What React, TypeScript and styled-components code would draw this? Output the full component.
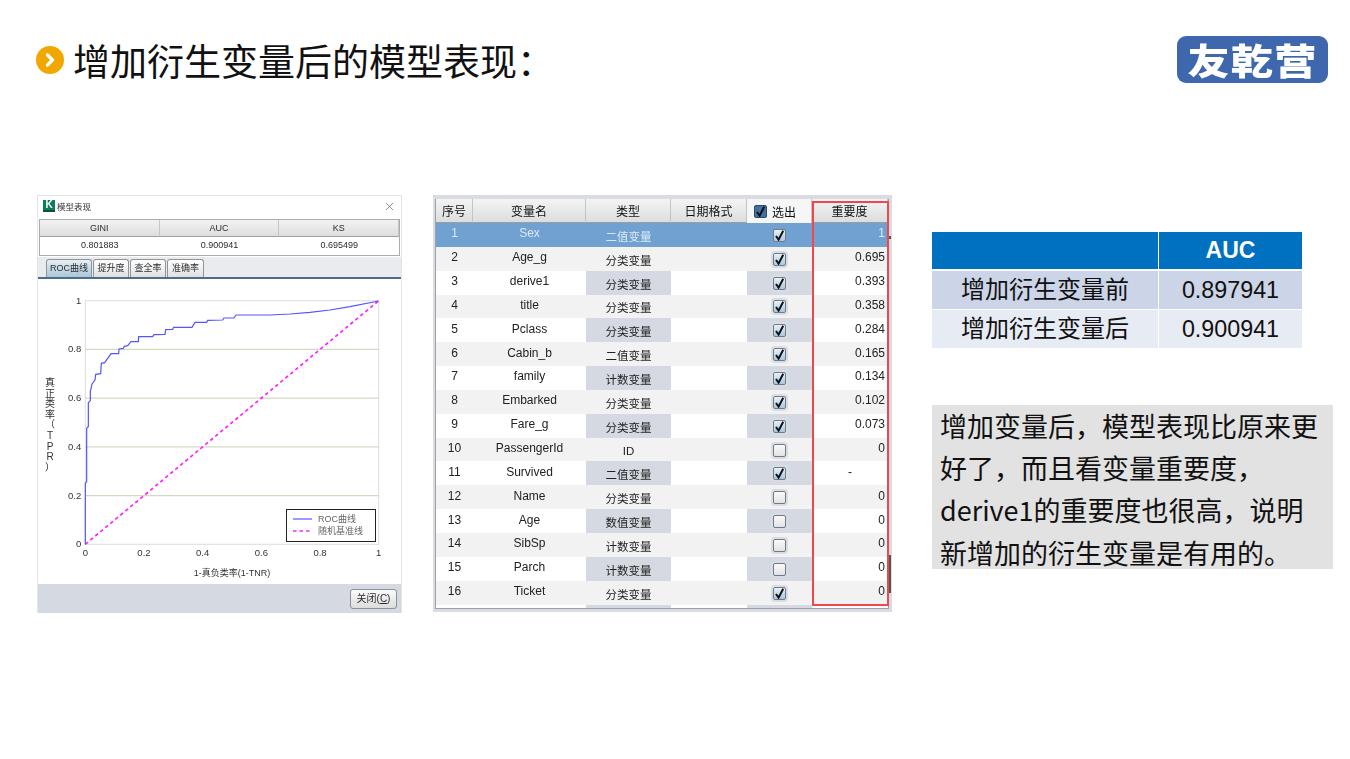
import styled, { createGlobalStyle } from "styled-components";
import { ChevronRight, X } from "lucide-react";

const CJK = `"Liberation Sans", "Noto Sans CJK SC", sans-serif`;
const SLIDE_FONT = `"Noto Sans CJK SC", sans-serif`;

const GlobalStyle = createGlobalStyle`
  html, body {
    margin: 0;
    padding: 0;
    background: #fff;
  }
  * {
    box-sizing: border-box;
  }
`;

const Page = styled.div`
  width: 1350px;
  height: 759px;
  overflow: hidden;
  padding: 36px 17px 0 36px;
  font-family: ${CJK};
  color: #111;
`;

const Header = styled.header`
  display: flex;
  align-items: center;
  justify-content: space-between;
  height: 47px;
  padding-right: 5px;
`;

const TitleWrap = styled.div`
  display: flex;
  align-items: center;
  gap: 9px;
`;

const Bullet = styled.span`
  width: 28px;
  height: 28px;
  border-radius: 50%;
  background: #f0a800;
  color: #fff;
  display: flex;
  align-items: center;
  justify-content: center;
`;

const Title = styled.h1`
  margin: 0;
  padding-top: 2px;
  font-size: 37px;
  font-weight: 400;
  line-height: 47px;
  font-family: ${SLIDE_FONT};
`;

const Logo = styled.div`
  width: 151px;
  height: 47px;
  border-radius: 9px;
  background: #3f67ae;
  color: #fff;
  display: flex;
  align-items: center;
  justify-content: center;
`;

const LogoText = styled.span`
  font-family: ${SLIDE_FONT};
  font-weight: 900;
  font-size: 36px;
  line-height: 47px;
  letter-spacing: 1px;
  white-space: nowrap;
  transform: scaleX(1.17);
`;

const Content = styled.main`
  display: flex;
  align-items: flex-start;
  margin-top: 112px;
  margin-left: 1px;
`;

// Pasted screenshots in the slide are slightly soft
const Shot = styled.section`
  filter: blur(0.45px);
  flex: none;
`;

const ModelWindow = styled(Shot)`
  width: 365px;
  height: 418px;
  display: flex;
  flex-direction: column;
  background: #fff;
  border: 1px solid #e4e4e4;
  border-bottom: none;
  font-size: 9px;
  color: #2c2c2c;
`;

const WindowBar = styled.div`
  height: 23px;
  display: flex;
  align-items: center;
  padding: 0 5px 3px 5px;
  gap: 2px;
  color: #333;
`;

const AppIcon = styled.span`
  width: 12px;
  height: 12px;
  background: #0b7d5e;
  border-bottom: 2px solid #0a4f3c;
  color: #fff;
  font-size: 10px;
  font-weight: 700;
  line-height: 10px;
  text-align: center;
`;

const WindowName = styled.span`
  flex: 1;
  font-size: 8.5px;
`;

const CloseGlyph = styled(X)`
  color: #555;
`;

const MetricGrid = styled.div`
  margin: 0 1px;
  display: grid;
  grid-template-columns: repeat(3, 1fr);
  border: 1px solid #a9acb0;
`;

const MetricHead = styled.div`
  height: 17px;
  line-height: 16px;
  text-align: center;
  background: linear-gradient(#f2f2f2, #dedede);
  border-bottom: 1px solid #9da0a4;
  border-right: 1px solid #c4c6c8;
`;

const MetricValue = styled.div`
  height: 18px;
  line-height: 17px;
  text-align: center;
  background: #fff;
`;

const Tabs = styled.div`
  height: 22px;
  margin-top: 1px;
  padding-left: 8px;
  display: flex;
  align-items: flex-end;
  gap: 1px;
  background: #e9ebee;
  border-bottom: 2px solid #4f6d86;
`;

const Tab = styled.div<{ $active?: boolean; $width: number }>`
  width: ${p => p.$width}px;
  height: 18px;
  line-height: 16px;
  text-align: center;
  border: 1px solid #8f9499;
  border-bottom: none;
  border-radius: 3px 3px 0 0;
  background: ${p => (p.$active ? "linear-gradient(#e6eff5, #a9c6da)" : "linear-gradient(#fff, #dfe0e2)")};
`;

const ChartArea = styled.div`
  flex: 1;
  min-height: 0;
`;

const ChartSvg = styled.svg`
  display: block;
`;

const Footer = styled.div`
  height: 29px;
  background: #d5d9e1;
  display: flex;
  align-items: center;
  justify-content: flex-end;
  padding-right: 4px;
`;

const CloseButton = styled.div`
  width: 47px;
  height: 20px;
  border: 1px solid #8e9195;
  border-radius: 3px;
  background: linear-gradient(#fbfbfb, #dcdcdc);
  font-size: 10px;
  line-height: 18px;
  text-align: center;

  u {
    text-decoration: underline;
  }
`;

const VariableFrame = styled(Shot)`
  position: relative;
  width: 459px;
  height: 417px;
  margin-left: 31px;
  background: #d9dce3;
  padding: 4px 3px 4px 2px;
  font-size: 12px;
  color: #222;
`;

const VariableTable = styled.div`
  height: 410px;
  overflow: hidden;
  background: #fff;
  border: 1px solid #9ea2a8;
  border-top: none;
`;

const COLUMNS = "37px 113px 85px 76px 65px 1fr";

const HeadRow = styled.div`
  display: grid;
  grid-template-columns: ${COLUMNS};
  height: 24px;
`;

const HeadCell = styled.div<{ $open?: boolean }>`
  display: flex;
  align-items: center;
  justify-content: ${p => (p.$open ? "flex-start" : "center")};
  gap: 5px;
  padding-left: ${p => (p.$open ? "7px" : "0")};
  font-size: 12px;
  color: #111;
  border-right: 1px solid #c2c4c8;
  border-bottom: ${p => (p.$open ? "none" : "1px solid #9a9ea4")};
  background: ${p => (p.$open ? "#f6f6f6" : "linear-gradient(#f4f4f4, #dddddd)")};
`;

const Row = styled.div<{ $tone: "selected" | "even" | "odd" }>`
  display: grid;
  grid-template-columns: ${COLUMNS};
  height: 23.85px;
  background: ${p => (p.$tone === "selected" ? "#70a1d0" : p.$tone === "even" ? "#f2f2f2" : "#fff")};
  color: ${p => (p.$tone === "selected" ? "#dce9f5" : "#222")};
`;

const Cell = styled.div`
  display: flex;
  align-items: center;
  justify-content: center;
  padding-bottom: 3px;
`;

const TypeCell = styled(Cell)<{ $shade: boolean }>`
  padding: 2px 0 0;
  font-size: 11.5px;
  background: ${p => (p.$shade ? "#d5d9e1" : "transparent")};
`;

const CheckCell = styled(Cell)<{ $shade: boolean }>`
  padding: 1px 0 0;
  background: ${p => (p.$shade ? "#d5d9e1" : "transparent")};
`;

const ScoreCell = styled(Cell)<{ $dash?: boolean }>`
  justify-content: ${p => (p.$dash ? "center" : "flex-end")};
  padding-right: ${p => (p.$dash ? "0" : "3px")};
`;

const Box = styled.span<{ $on: boolean; $halo: boolean }>`
  width: 13px;
  height: 13px;
  display: flex;
  align-items: center;
  justify-content: center;
  border: 1px solid #6f7b88;
  border-radius: 2px;
  color: #111;
  background: ${p => (p.$on ? "linear-gradient(#e8f1f8, #a9c6de)" : "linear-gradient(#fafafa, #e2e3e5)")};
  box-shadow: ${p => (p.$halo ? "0 0 0 2px #d9dde3" : "none")};
`;

const HeadBox = styled.span`
  width: 13px;
  height: 13px;
  border: 1px solid #2c4a68;
  border-radius: 2px;
  background: #3f72a3;
  color: #0b0b0b;
  display: flex;
  align-items: center;
  justify-content: center;
`;

const Highlight = styled.div`
  position: absolute;
  left: 379px;
  top: 6px;
  width: 77px;
  height: 405px;
  border: 2px solid #f0474c;
  pointer-events: none;
`;

const EdgeMark = styled.span<{ $top: number; $height: number }>`
  position: absolute;
  left: 456px;
  top: ${p => p.$top}px;
  width: 2px;
  height: ${p => p.$height}px;
  background: #555;
`;

const SidePanel = styled.aside`
  width: 401px;
  margin-left: 40px;
  margin-top: 37px;
  flex: none;
`;

const AucTable = styled.div`
  width: 370px;
  display: grid;
  grid-template-columns: 226px 143px;
  column-gap: 1px;
  font-size: 24px;
`;

const AucHead = styled.div`
  height: 37px;
  margin-bottom: 2px;
  background: #0070c0;
  color: #fff;
  font-size: 23px;
  font-weight: 700;
  line-height: 37px;
  text-align: center;
`;

const AucCell = styled.div<{ $alt?: boolean }>`
  height: 38px;
  margin-bottom: 1px;
  background: ${p => (p.$alt ? "#e7ebf4" : "#cbd5e7")};
  line-height: 38px;
  text-align: center;
`;

const AucValue = styled(AucCell)`
  font-size: 23.3px;
`;

const Note = styled.div`
  margin-top: 57px;
  height: 164px;
  padding: 0 8px;
  background: #e2e2e2;
  font-family: ${SLIDE_FONT};
  font-size: 27px;
  line-height: 42.2px;
  color: #111;
`;

const NoteText = styled.p`
  margin: -1px 0 0;
`;

const rows: [number, string, string, boolean, string][] = [
  [1, "Sex", "二值变量", true, "1"],
  [2, "Age_g", "分类变量", true, "0.695"],
  [3, "derive1", "分类变量", true, "0.393"],
  [4, "title", "分类变量", true, "0.358"],
  [5, "Pclass", "分类变量", true, "0.284"],
  [6, "Cabin_b", "二值变量", true, "0.165"],
  [7, "family", "计数变量", true, "0.134"],
  [8, "Embarked", "分类变量", true, "0.102"],
  [9, "Fare_g", "分类变量", true, "0.073"],
  [10, "PassengerId", "ID", false, "0"],
  [11, "Survived", "二值变量", true, "-"],
  [12, "Name", "分类变量", false, "0"],
  [13, "Age", "数值变量", false, "0"],
  [14, "SibSp", "计数变量", false, "0"],
  [15, "Parch", "计数变量", false, "0"],
  [16, "Ticket", "分类变量", true, "0"],
];

// Curve traced from the reference, in page pixels x 3 relative to (30, 280)
const rocTrace = [
  [166, 793], [166, 610], [170, 605], [170, 445], [175, 440], [175, 368], [181, 362], [181, 335],
  [186, 312], [195, 300], [197, 283], [212, 281], [214, 250], [224, 248], [243, 221], [266, 221],
  [267, 207], [280, 205], [283, 199], [293, 197], [303, 185], [325, 185], [326, 170], [368, 170],
  [372, 164], [405, 163], [407, 149], [428, 148], [431, 142], [486, 142], [495, 127], [530, 127],
  [533, 121], [578, 120], [582, 114], [612, 114], [618, 105], [720, 105], [780, 102], [840, 97],
  [900, 90], [960, 80], [1046, 63],
];
const rocPoints = rocTrace.map(([x, y]) => `${30 + x / 3},${280 + y / 3}`).join(" ");

const PLOT = { left: 85.3, right: 378.7, top: 300.7, bottom: 544.3 };
const ticks = [0, 0.2, 0.4, 0.6, 0.8, 1];
const yLabel = ["真", "正", "类", "率", "（", "T", "P", "R", "）"];

// Tall swing-style tick, its tail reaches the top of the box
const TickMark = () => (
  <svg width="11" height="11" viewBox="0 0 11 11" fill="none">
    <path d="M2 6 L4.6 9.6 L9.2 0.8" stroke="currentColor" strokeWidth="2" />
  </svg>
);

const RocChart = () => {
  const w = PLOT.right - PLOT.left;
  const h = PLOT.bottom - PLOT.top;
  return (
    <ChartSvg width={363} height={305} viewBox="38 279 363 305" fontFamily={CJK} fontSize="9.5" fill="#333">
      <rect x={PLOT.left} y={PLOT.top} width={w} height={h} fill="#fff" stroke="#dcdcdc" />
      {ticks.slice(1, 5).map(t => (
        <line
          key={t}
          x1={PLOT.left}
          x2={PLOT.right}
          y1={PLOT.bottom - t * h}
          y2={PLOT.bottom - t * h}
          stroke="#d3dac3"
          strokeWidth="1.2"
        />
      ))}
      {ticks.map(t => (
        <g key={t}>
          <text x={PLOT.left - 4} y={PLOT.bottom - t * h + 3} textAnchor="end">{t}</text>
          <text x={PLOT.left + t * w} y={PLOT.bottom + 12} textAnchor="middle">{t}</text>
        </g>
      ))}
      <line x1={PLOT.left} y1={PLOT.bottom} x2={PLOT.right} y2={PLOT.top} stroke="#ff22ff" strokeWidth="1.7" strokeDasharray="3.5 3" />
      <polyline points={rocPoints} fill="none" stroke="#5555ff" strokeWidth="1.2" />
      {yLabel.map((c, i) => (
        <text key={i} x={50} y={386 + i * 10.6} textAnchor="middle" fontSize="10">{c}</text>
      ))}
      <text x={232} y={576} textAnchor="middle" fontSize="9">1-真负类率(1-TNR)</text>
      <rect x={286.5} y={509.5} width={89} height={32} fill="#fff" stroke="#222" />
      <line x1={293} x2={312} y1={519} y2={519} stroke="#5555ff" strokeWidth="1.2" />
      <line x1={293} x2={312} y1={531} y2={531} stroke="#ff22ff" strokeWidth="1.7" strokeDasharray="3.5 3" />
      <text x={318} y={522} fontSize="9" fill="#666">ROC曲线</text>
      <text x={318} y={534} fontSize="9" fill="#666">随机基准线</text>
    </ChartSvg>
  );
};

const App = () => (
  <Page>
    <GlobalStyle />
    <Header>
      <TitleWrap>
        <Bullet><ChevronRight size={20} strokeWidth={4} /></Bullet>
        <Title>增加衍生变量后的模型表现：</Title>
      </TitleWrap>
      <Logo><LogoText>友乾营</LogoText></Logo>
    </Header>

    <Content>
      <ModelWindow>
        <WindowBar>
          <AppIcon>K</AppIcon>
          <WindowName>模型表现</WindowName>
          <CloseGlyph size={13} strokeWidth={1.2} />
        </WindowBar>
        <MetricGrid>
          <MetricHead>GINI</MetricHead>
          <MetricHead>AUC</MetricHead>
          <MetricHead>KS</MetricHead>
          <MetricValue>0.801883</MetricValue>
          <MetricValue>0.900941</MetricValue>
          <MetricValue>0.695499</MetricValue>
        </MetricGrid>
        <Tabs>
          <Tab $active $width={46}>ROC曲线</Tab>
          <Tab $width={36}>提升度</Tab>
          <Tab $width={36}>查全率</Tab>
          <Tab $width={37}>准确率</Tab>
        </Tabs>
        <ChartArea><RocChart /></ChartArea>
        <Footer><CloseButton>关闭(<u>C</u>)</CloseButton></Footer>
      </ModelWindow>

      <VariableFrame>
        <VariableTable>
          <HeadRow>
            <HeadCell>序号</HeadCell>
            <HeadCell>变量名</HeadCell>
            <HeadCell>类型</HeadCell>
            <HeadCell>日期格式</HeadCell>
            <HeadCell $open><HeadBox><TickMark /></HeadBox>选出</HeadCell>
            <HeadCell>重要度</HeadCell>
          </HeadRow>
          {rows.map(([no, name, type, on, score]) => {
            const shade = no % 2 === 1 && no > 1;
            return (
              <Row key={no} $tone={no === 1 ? "selected" : no % 2 === 0 ? "even" : "odd"}>
                <Cell>{no}</Cell>
                <Cell>{name}</Cell>
                <TypeCell $shade={shade}>{type}</TypeCell>
                <Cell />
                <CheckCell $shade={shade}>
                  <Box $on={on} $halo={no !== 1}>{on && <TickMark />}</Box>
                </CheckCell>
                <ScoreCell $dash={score === "-"}>{score}</ScoreCell>
              </Row>
            );
          })}
          <Row $tone="odd">
            <Cell />
            <Cell />
            <TypeCell $shade />
            <Cell />
            <CheckCell $shade />
            <Cell />
          </Row>
        </VariableTable>
        <Highlight />
        <EdgeMark $top={41} $height={3} />
        <EdgeMark $top={360} $height={38} />
      </VariableFrame>

      <SidePanel>
        <AucTable>
          <AucHead />
          <AucHead>AUC</AucHead>
          <AucCell>增加衍生变量前</AucCell>
          <AucValue>0.897941</AucValue>
          <AucCell $alt>增加衍生变量后</AucCell>
          <AucValue $alt>0.900941</AucValue>
        </AucTable>
        <Note>
          <NoteText>增加变量后，模型表现比原来更好了，而且看变量重要度，derive1的重要度也很高，说明新增加的衍生变量是有用的。</NoteText>
        </Note>
      </SidePanel>
    </Content>
  </Page>
);

export default App;
